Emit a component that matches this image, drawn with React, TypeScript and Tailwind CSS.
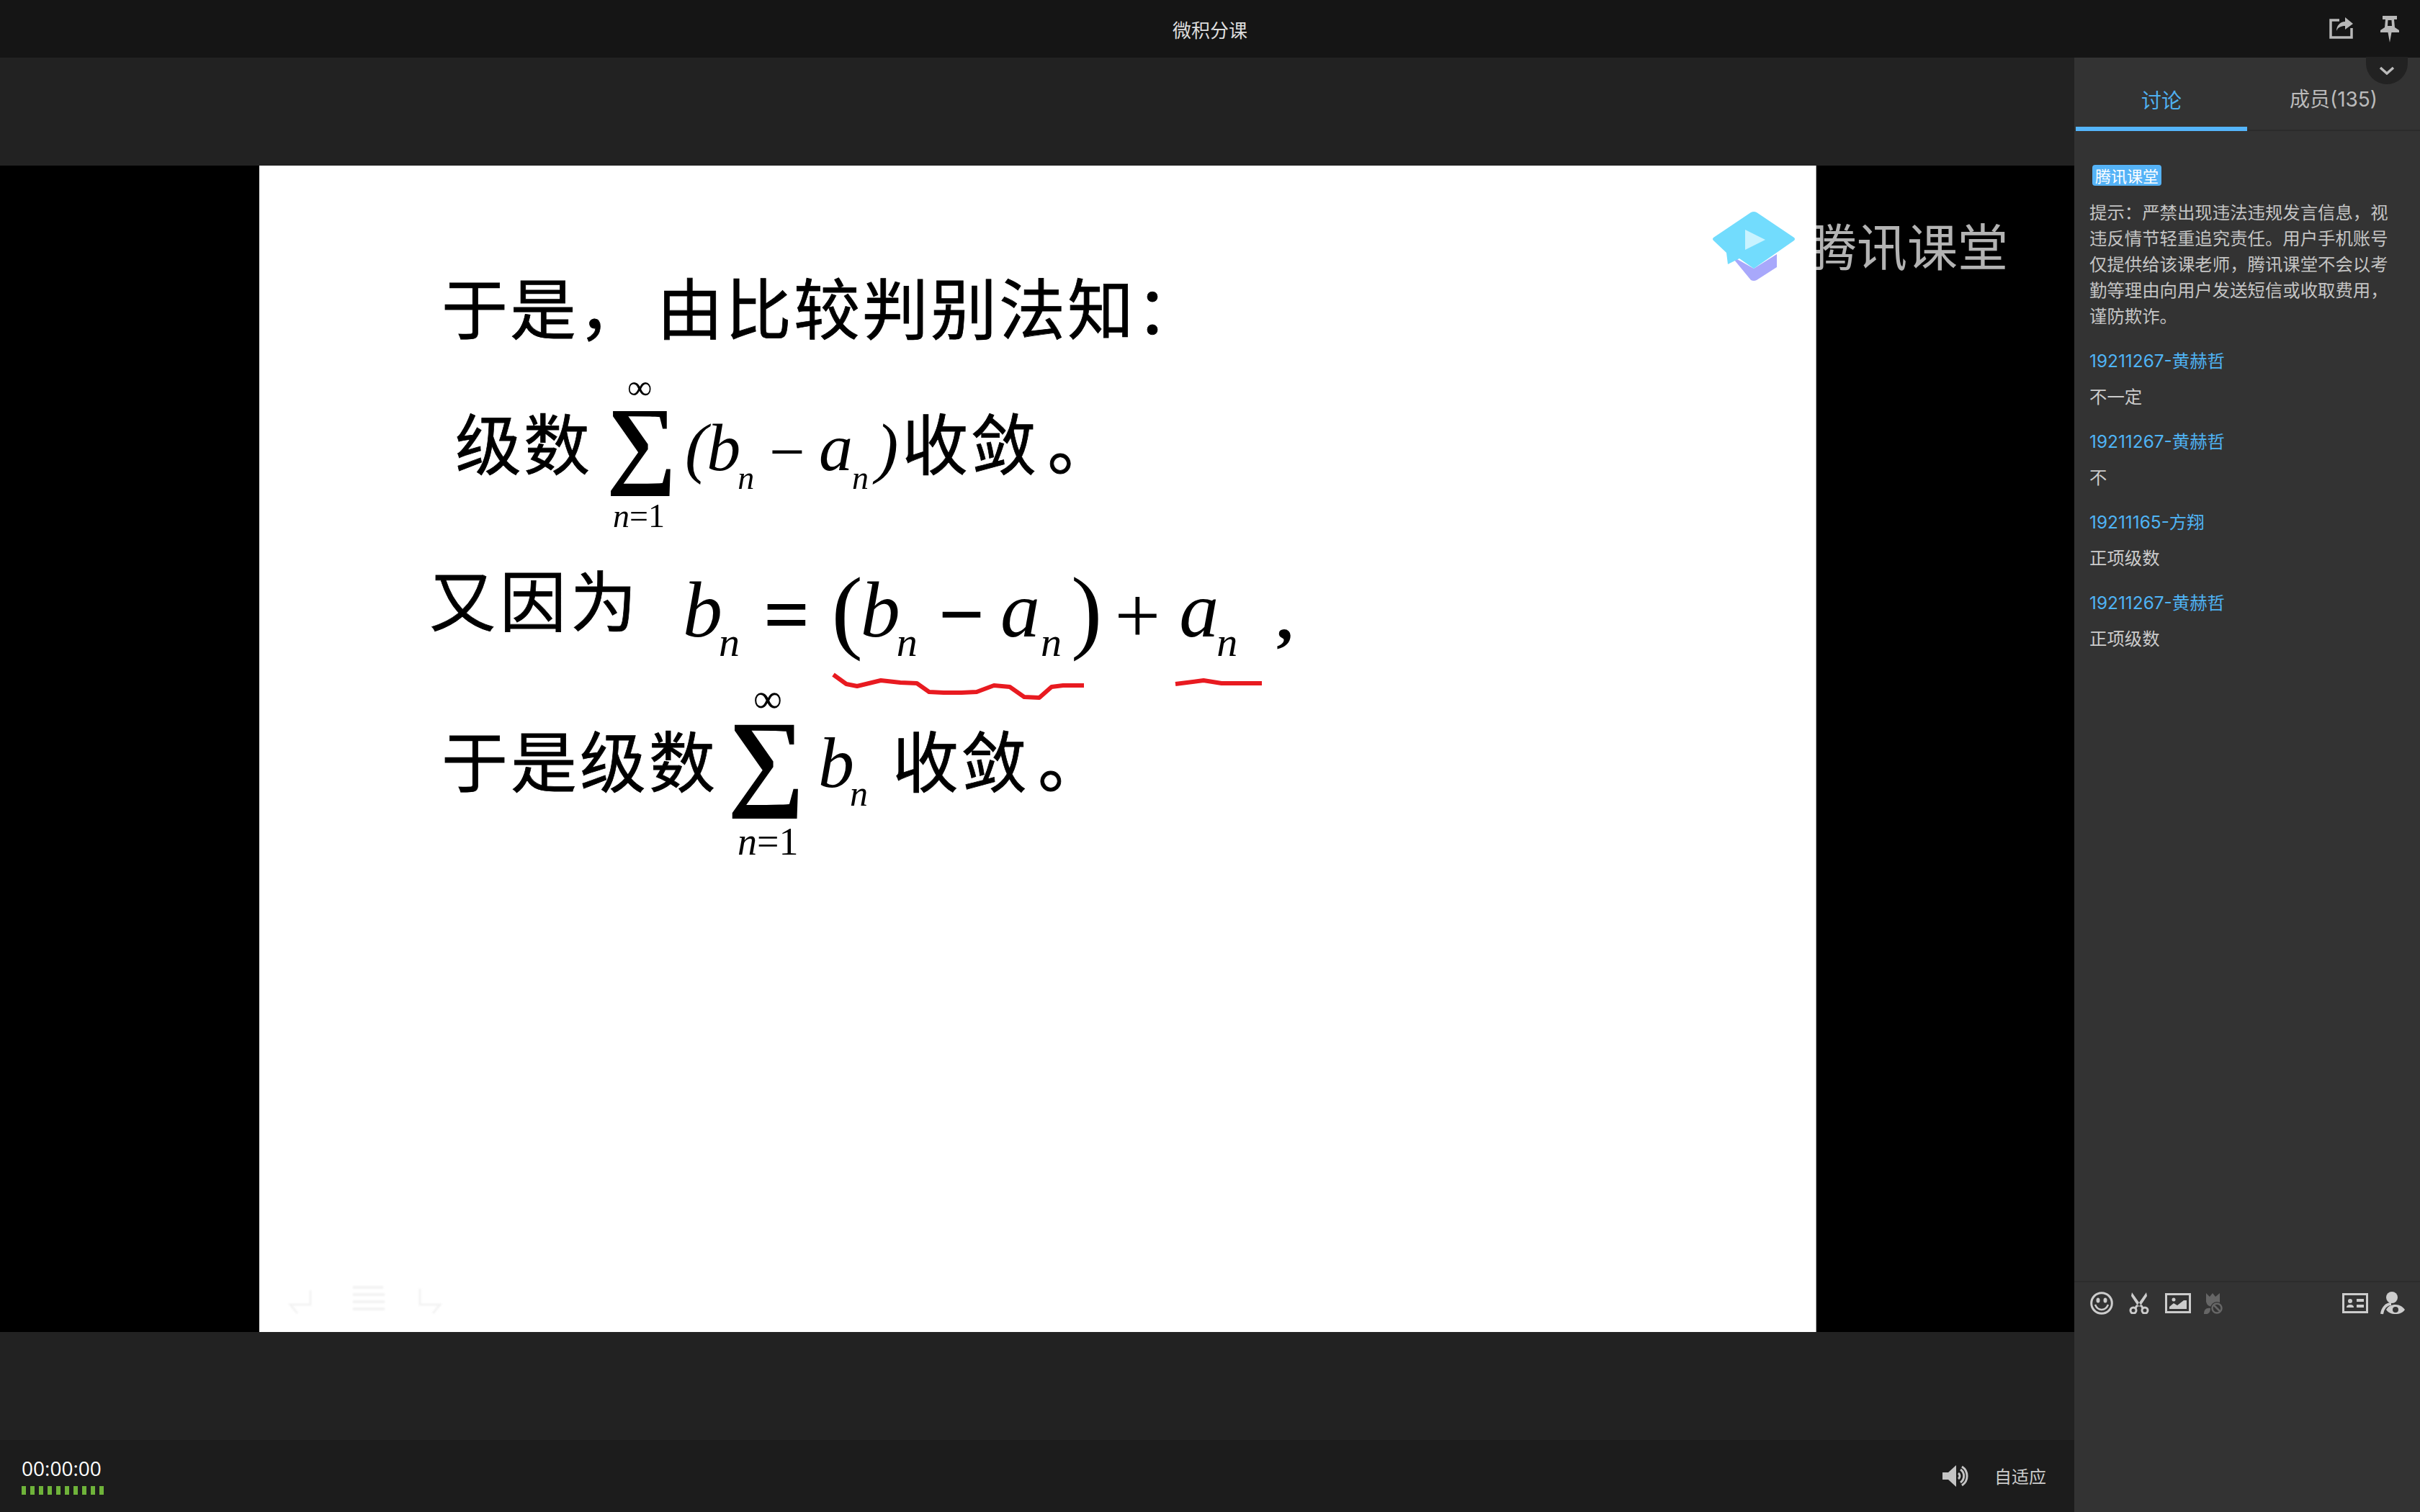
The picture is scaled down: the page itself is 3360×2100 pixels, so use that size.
import React from "react";

const cjk = "font-['Noto_Sans_CJK_SC',sans-serif]";
const ui = "font-['Inter','Noto_Sans_CJK_SC',sans-serif]";
const serif = "font-['Liberation_Serif',serif]";
const zh = "text-[92px] leading-none tracking-[3px] whitespace-nowrap [-webkit-text-stroke:0.8px_#000]";
const mi = `${serif} italic text-[110px] leading-none`;
const subL = `${serif} italic text-[58px] leading-none relative top-[27px]`;
const symL = `${serif} text-[113px] font-bold leading-none relative top-[7px]`;
const mi2 = `${serif} italic text-[94px] leading-none`;
const sub2 = `${serif} italic text-[46px] leading-none relative top-[26px]`;

const notice = [
  "提示：严禁出现违法违规发言信息，视",
  "违反情节轻重追究责任。用户手机账号",
  "仅提供给该课老师，腾讯课堂不会以考",
  "勤等理由向用户发送短信或收取费用，",
  "谨防欺诈。",
];

const messages = [
  { name: "19211267-黄赫哲", text: "不一定" },
  { name: "19211267-黄赫哲", text: "不" },
  { name: "19211165-方翔", text: "正项级数" },
  { name: "19211267-黄赫哲", text: "正项级数" },
];

function ShareIcon() {
  return (
    <svg width="33" height="30" viewBox="0 0 33 30" fill="none">
      <path d="M14 4H2v24h29V15" stroke="#b8b8b8" strokeWidth="3.5" />
      <path d="M22 0l11 9-11 8v-5c-6 0-10 2-12 7 0-7 5-13 12-13z" fill="#b8b8b8" />
    </svg>
  );
}

function PinIcon() {
  return (
    <svg width="26" height="37" viewBox="0 0 26 37">
      <path
        fillRule="evenodd"
        d="M3 0h20v5h-4l1 11 6 4v3H15.5L13 37l-2.500-14H0v-3l6-4 1-11H3zM10.500 6l-.5 8h6l-.5-8z"
        fill="#b8b8b8"
      />
    </svg>
  );
}

function SpeakerIcon() {
  return (
    <svg width="36" height="30" viewBox="0 0 36 30" fill="none">
      <path d="M0 10h8L19 0v30L8 20H0z" fill="#c4c4c4" />
      <path d="M22 11a5 5 0 0 1 0 8M25 6a11 11 0 0 1 0 18M27 2a15.500 15.500 0 0 1 0 26" stroke="#c4c4c4" strokeWidth="3" />
    </svg>
  );
}

function SmileIcon() {
  return (
    <svg width="32" height="32" viewBox="0 0 32 32" fill="none">
      <circle cx="16" cy="16" r="14.300" stroke="#cccccc" strokeWidth="3" />
      <ellipse cx="11" cy="12" rx="2.500" ry="3.500" fill="#cccccc" />
      <ellipse cx="21" cy="12" rx="2.500" ry="3.500" fill="#cccccc" />
      <path d="M7 18c2 5 5 7 9 7s7-2 9-7" stroke="#cccccc" strokeWidth="2.500" />
    </svg>
  );
}

function ScissorsIcon() {
  return (
    <svg width="28" height="30" viewBox="0 0 28 30" fill="none">
      <path d="M4 0l12 17-3 3L3 5zM24 0L12 17l3 3L25 5z" fill="#cccccc" />
      <circle cx="6" cy="25" r="4" stroke="#cccccc" strokeWidth="3" />
      <circle cx="22" cy="25" r="4" stroke="#cccccc" strokeWidth="3" />
      <path d="M8.500 22l3-4M19.500 22l-3-4" stroke="#cccccc" strokeWidth="3" />
    </svg>
  );
}

function ImageIcon() {
  return (
    <svg width="36" height="28" viewBox="0 0 36 28" fill="none">
      <rect x="1.500" y="1.500" width="33" height="25" stroke="#cccccc" strokeWidth="3" />
      <circle cx="12" cy="9" r="2.500" fill="#cccccc" />
      <path d="M6 22v-3l6-5 5 3 9-7h4v12z" fill="#cccccc" />
    </svg>
  );
}

function FlowerOffIcon() {
  return (
    <svg width="26" height="30" viewBox="0 0 26 30" fill="none">
      <path d="M3 1l5 5 4-5 4 5 6-5v13a9 9 0 0 1-11 6 9 9 0 0 1-8-7z" fill="#666666" />
      <path d="M0 30c0-6 3-9 9-8 0 6-3 9-9 8z" fill="#666666" />
      <circle cx="18" cy="22" r="9" fill="#333333" />
      <circle cx="18" cy="22" r="6.500" stroke="#666666" strokeWidth="2.500" />
      <path d="M14 18l8 8" stroke="#666666" strokeWidth="2.500" />
    </svg>
  );
}

function CardIcon() {
  return (
    <svg width="36" height="28" viewBox="0 0 36 28" fill="none">
      <rect x="1.500" y="1.500" width="33" height="25" stroke="#cccccc" strokeWidth="3" />
      <circle cx="11" cy="11" r="3" fill="#cccccc" />
      <path d="M6 20c0-3 2-4 5-4s5 1 5 4z" fill="#cccccc" />
      <rect x="20" y="8" width="10" height="4" fill="#cccccc" />
      <rect x="20" y="16" width="10" height="4" fill="#cccccc" />
    </svg>
  );
}

function PersonEyeIcon() {
  return (
    <svg width="34" height="32" viewBox="0 0 34 32" fill="none">
      <circle cx="16" cy="8" r="8" fill="#cccccc" />
      <path d="M2 31c1-8 6-14 13-14" stroke="#cccccc" strokeWidth="4" />
      <path fillRule="evenodd" d="M8 25c3-5 7-7 13-7s10 3 13 7c-3 4-7 6-13 6S11 29 8 25zm13-4a4 4 0 1 0 0 8 4 4 0 0 0 0-8z" fill="#cccccc" />
    </svg>
  );
}

function Logo() {
  return (
    <svg width="116" height="98" viewBox="0 0 116 98">
      <path d="M26 62l32 18 32-20v18L62 96q-4 2-8 0z" fill="#a8a8fb" />
      <path d="M54 2q4-2 8 0l52 35q2 2 0 4L58 80 38 66 22 74 20 58 2 41q-2-2 0-4z" fill="#72dcfd" />
      <path d="M46 26l28 14-28 14z" fill="#c8f3ff" />
    </svg>
  );
}

function Slide() {
  return (
    <div className="relative ml-[360px] w-[2162px] h-full bg-white border-r border-[#aaaaaa]">
      <div className={`flex flex-col pt-[148px] text-black blur-[0.6px] ${cjk}`}>
        <div className="flex items-baseline pl-[253px]">
          <span className={zh}>于是，</span>
          <span className={`${zh} ml-[14px]`}>由比较判别法知：</span>
        </div>

        <div className="mt-[68px] h-[200px] flex items-baseline pl-[272px]">
          <span className={zh}>级数</span>
          <span className={`relative ml-[20px] top-[8px] ${serif} font-bold text-[136px] leading-none`}>
            ∑
            <span className="absolute left-[29px] -top-[32px] text-[48px] font-normal leading-none">∞</span>
            <span className="absolute left-[9px] top-[148px] text-[46px] font-normal leading-none whitespace-nowrap">
              <i>n</i>=1
            </span>
          </span>
          <span className="relative top-[1px] flex items-baseline">
            <span className={`${serif} text-[94px] leading-none italic ml-[12px]`}>(</span>
            <span className={`${mi2} -ml-[1px]`}>b</span>
            <span className={`${sub2} -ml-[4px]`}>n</span>
            <span className={`${serif} text-[88px] leading-none relative top-[4px] ml-[21px]`}>−</span>
            <span className={`${mi2} ml-[19px]`}>a</span>
            <span className={`${sub2} -ml-[1px]`}>n</span>
            <span className={`${serif} text-[94px] leading-none italic ml-[10px]`}>)</span>
          </span>
          <span className={`${zh} ml-[5px]`}>收敛</span>
          <span className={`${zh} ml-[12px]`}>。</span>
        </div>

        <div className="mt-[23px] h-[200px] flex items-baseline pl-[236px]">
          <span className={`${zh} tracking-[6px]`}>又因为</span>
          <span className="relative top-[14px] flex items-baseline">
            <span className={`${mi} ml-[58px]`}>b</span>
            <span className={`${subL} -ml-[5px]`}>n</span>
            <span className={`${symL} ml-[33px]`}>=</span>
            <span className={`${serif} text-[130px] leading-none relative top-[7px] ml-[30px]`}>(</span>
            <span className={`${mi} -ml-[3px]`}>b</span>
            <span className={`${subL} -ml-[5px]`}>n</span>
            <span className={`${symL} ml-[29px]`}>−</span>
            <span className={`${mi} ml-[22px]`}>a</span>
            <span className={`${subL} ml-[1px]`}>n</span>
            <span className={`${serif} text-[130px] leading-none relative top-[7px] ml-[13px]`}>)</span>
            <span className={`${serif} text-[113px] leading-none relative top-[9px] ml-[17px]`}>+</span>
            <span className={`${mi} ml-[26px]`}>a</span>
            <span className={`${subL} -ml-[3px]`}>n</span>
            <span className={`${serif} text-[92px] font-bold leading-none relative top-[3px] ml-[54px]`}>,</span>
          </span>
        </div>

        <div className="mt-[6px] flex items-baseline pl-[253px]">
          <span className={`${zh} tracking-[4px]`}>于是级数</span>
          <span className={`relative ml-[13px] top-[12px] ${serif} font-bold text-[150px] leading-none`}>
            ∑
            <span className="absolute left-[36px] -top-[37px] text-[56px] font-normal leading-none">∞</span>
            <span className="absolute left-[14px] top-[163px] text-[54px] font-normal leading-none whitespace-nowrap">
              <i>n</i>=1
            </span>
          </span>
          <span className={`${serif} italic text-[100px] leading-none ml-[19px]`}>b</span>
          <span className={`${serif} italic text-[50px] leading-none relative top-[26px] -ml-[6px]`}>n</span>
          <span className={`${zh} ml-[34px]`}>收敛</span>
          <span className={`${zh} ml-[12px]`}>。</span>
        </div>
      </div>

      {/* pen marks drawn on the slide */}
      <svg className="absolute left-[790px] top-[700px] blur-[0.6px]" width="620" height="46" viewBox="790 700 620 46" fill="none">
        <path
          d="M797 707L815 720L830 723L863 715L890 718L913 719L930 731L950 732L975 732L996 731L1020 722L1042 724L1062 738L1083 739L1100 724L1116 722L1145 722"
          stroke="#e81a20"
          strokeWidth="6"
          strokeLinejoin="round"
        />
        <path d="M1272 720L1311 715L1336 719L1392 719" stroke="#e81a20" strokeWidth="6" strokeLinejoin="round" />
      </svg>

      {/* faint pen controls left on the slide */}
      <svg className="absolute left-[33px] top-[1552px] blur-[1px]" width="240" height="50" viewBox="0 0 240 50" fill="none">
        <path d="M38 10v20H10l10 12" stroke="#f3f3f3" strokeWidth="3" />
        <path d="M97 6h42M97 16h44M97 26h44M97 36h44" stroke="#f3f3f3" strokeWidth="4" />
        <path d="M190 8v22h28l-10 12" stroke="#f3f3f3" strokeWidth="3" />
      </svg>
    </div>
  );
}

export default function App() {
  return (
    <div className={`w-[3360px] h-[2100px] flex flex-col overflow-hidden ${cjk}`}>
      <header className="relative h-20 shrink-0 bg-[#151515] flex items-center justify-center">
        <span className="text-[26px] text-[#dddddd]">微积分课</span>
        <div className="absolute right-[29px] top-[22px] flex items-start gap-[38px]">
          <span className="mt-[2px]">
            <ShareIcon />
          </span>
          <PinIcon />
        </div>
      </header>

      <div className="flex-1 flex min-h-0">
        <main className="w-[2880px] flex flex-col">
          <div className="h-[150px] bg-[#222222]" />
          <div className="relative h-[1620px] bg-black">
            <Slide />
            <div className="absolute left-[2377px] top-[63px] flex items-center">
              <Logo />
              <span className="ml-[15px] -mt-[4px] text-[70px] leading-none text-white/70">腾讯课堂</span>
            </div>
          </div>
          <div className="h-[150px] bg-[#222222]" />
          <div className="flex-1 bg-[#1c1c1c] flex items-center justify-between pl-[30px] pr-[39px]">
            <div className="flex flex-col gap-[10px]">
              <span className="font-['Open_Sans',sans-serif] text-[28px] leading-[30px] text-white">00:00:00</span>
              <div className="flex gap-[6px]">
                {Array.from({ length: 10 }).map((_, i) => (
                  <span key={i} className="w-[6px] h-3 bg-[#6fb33a]" />
                ))}
              </div>
            </div>
            <div className="flex items-center gap-[36px]">
              <SpeakerIcon />
              <span className="text-[24px] text-[#cccccc]">自适应</span>
            </div>
          </div>
        </main>

        <aside className="relative flex-1 bg-[#333333] flex flex-col">
          <div className="absolute right-[17px] -top-[1px] w-[58px] h-[38px] rounded-b-[29px] bg-[#222222] flex items-center justify-center">
            <svg width="22" height="12" viewBox="0 0 22 12" fill="none">
              <path d="M2 2l9 8 9-8" stroke="#bbbbbb" strokeWidth="3.500" />
            </svg>
          </div>

          <div className="h-[102px] shrink-0 flex border-b-2 border-[#2b2b2b]">
            <div className="relative w-[238px] ml-[2px] flex items-center justify-center pt-[15px] text-[28px] text-[#4fb0f0]">
              讨论
              <span className="absolute left-0 right-0 -bottom-[2px] h-[6px] bg-[#55b5fb]" />
            </div>
            <div className={`flex-1 flex items-center justify-center pt-[15px] text-[28px] text-[#bbbbbb] ${ui}`}>
              成员(135)
            </div>
          </div>

          <div className={`flex-1 pl-[21px] pr-4 ${ui}`}>
            <span className={`block mt-[47px] ml-1 w-[96px] h-[29px] rounded-[4px] bg-[#55b3f7] text-center text-[22px] leading-[29px] text-white ${cjk}`}>
              腾讯课堂
            </span>
            <div className={`mt-[18px] text-[24.4px] leading-[36px] text-[#c4c4c4] ${cjk}`}>
              {notice.map((line) => (
                <div key={line} className="whitespace-nowrap">{line}</div>
              ))}
            </div>
            <div className="mt-[27px] flex flex-col gap-[26px]">
              {messages.map((m, i) => (
                <div key={i} className="flex flex-col gap-[14px] text-[24.4px] leading-[36px]">
                  <span className="text-[#4fb4f5]">{m.name}</span>
                  <span className="text-[#cccccc]">{m.text}</span>
                </div>
              ))}
            </div>
          </div>

          <div className="h-[321px] shrink-0 border-t-2 border-[#2c2c2c] flex items-start justify-between pl-[22px] pr-[21px] pt-[13px]">
            <div className="flex items-center gap-[22px]">
              <SmileIcon />
              <ScissorsIcon />
              <ImageIcon />
              <span className="-ml-[4px]">
                <FlowerOffIcon />
              </span>
            </div>
            <div className="flex items-center gap-[17px]">
              <CardIcon />
              <PersonEyeIcon />
            </div>
          </div>
        </aside>
      </div>
    </div>
  );
}
